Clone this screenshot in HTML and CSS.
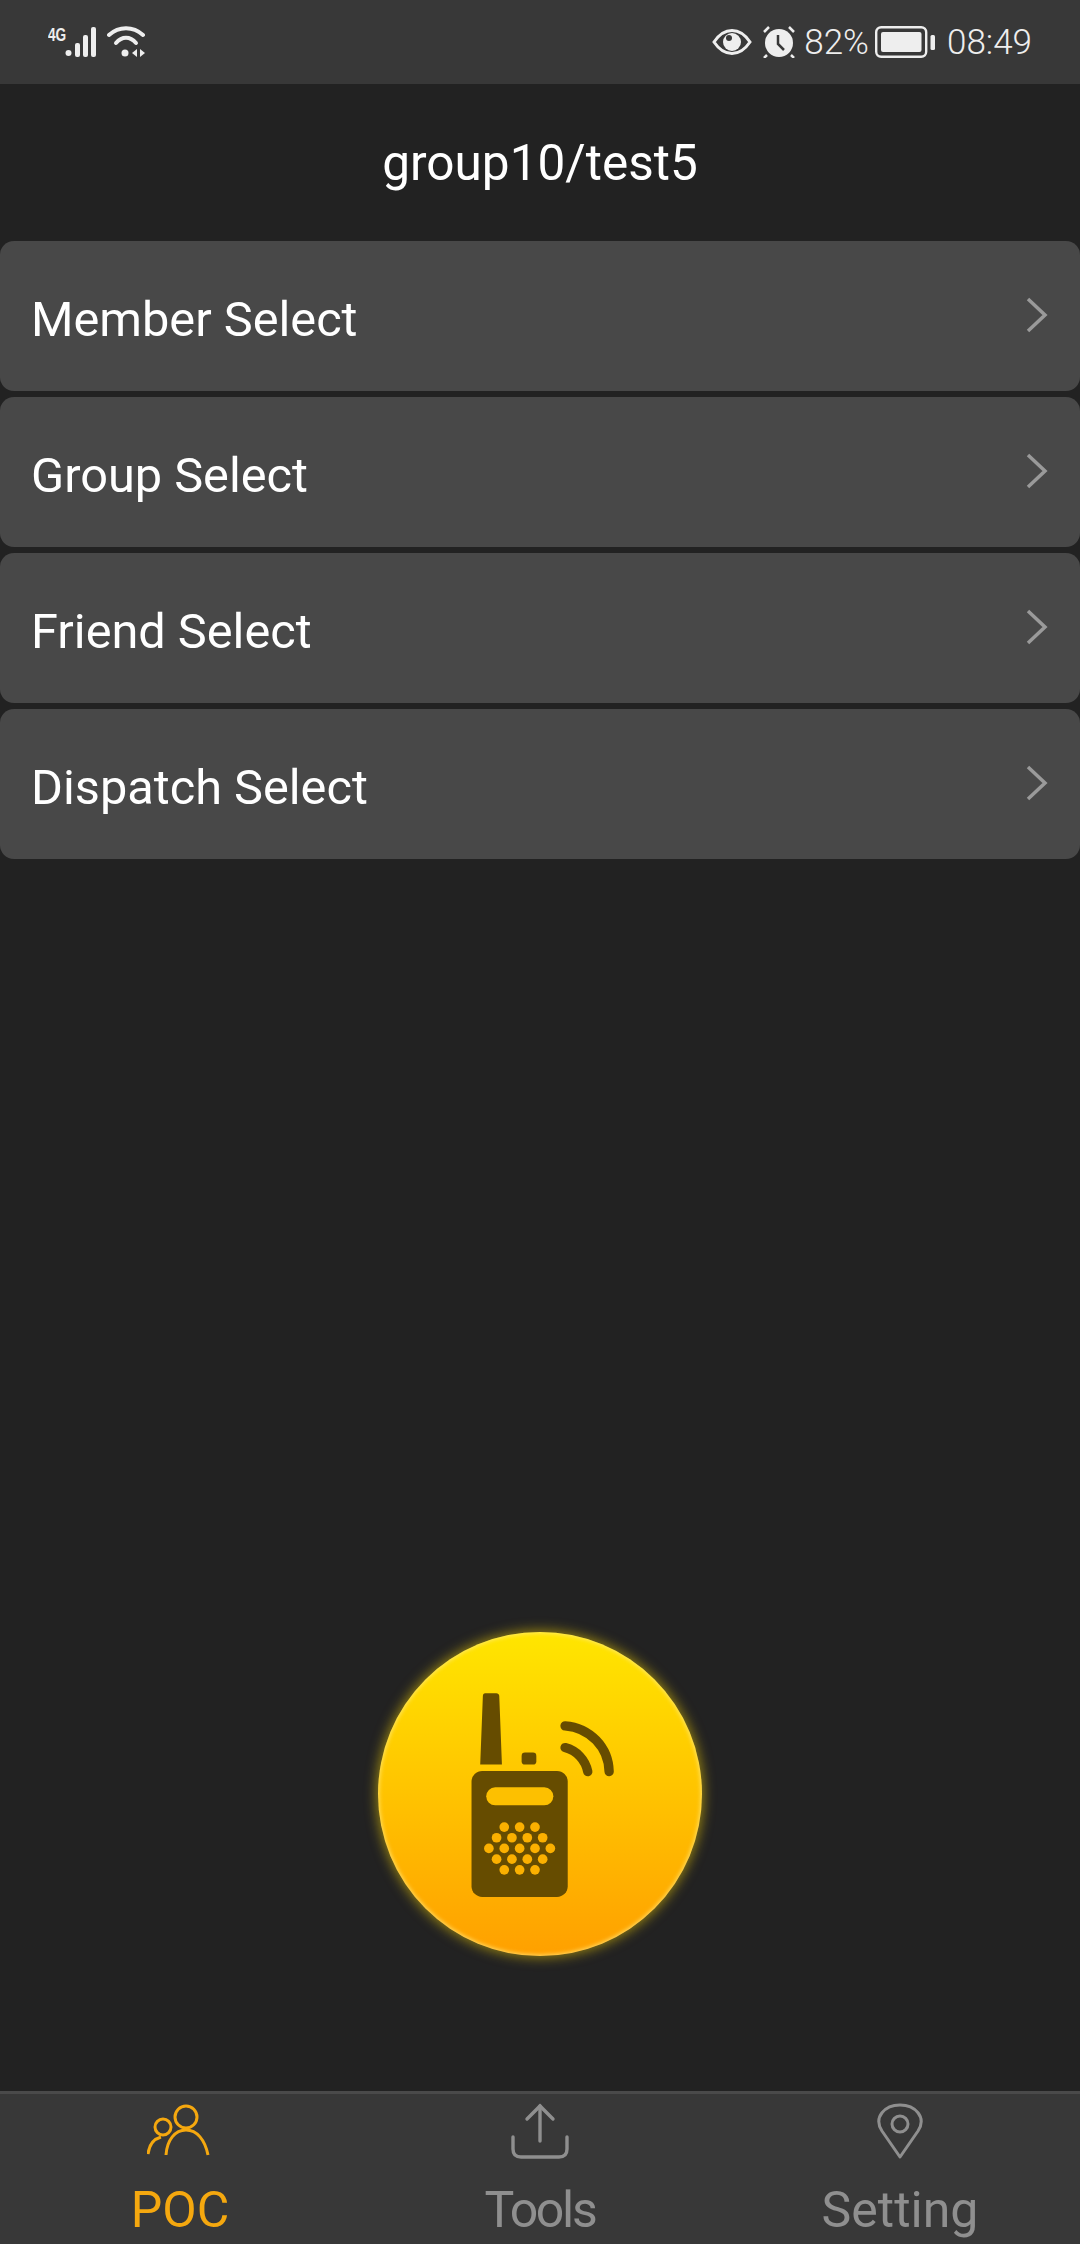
FILE: index.html
```html
<!DOCTYPE html>
<html lang="en">
<head>
<meta charset="utf-8">
<title>POC</title>
<link rel="stylesheet" href="styles.css">
</head>
<body>
<div class="app">
  <header class="status">
    <div class="status-left">
      <span class="net">4G</span>
      <svg class="signal" viewBox="0 0 34 32"><g fill="#eee"><circle cx="3.500" cy="27" r="3"/><rect x="10" y="17" width="5" height="14" rx="2"/><rect x="18" y="9" width="5" height="22" rx="2"/><rect x="26" y="1" width="5" height="30" rx="2"/></g></svg>
      <svg class="wifi" viewBox="0 0 40 32"><g fill="none" stroke="#eee" stroke-width="4" stroke-linecap="round"><path d="M2 9C12 0 26 0 36 9"/><path d="M9 17C15 10 23 10 29 17"/></g><circle cx="18" cy="27" r="3.500" fill="#eee"/><path d="M30 23v8l-5-4zM33 23v8l5-4z" fill="#eee"/></svg>
    </div>
    <div class="status-right">
      <svg class="eye" viewBox="0 0 40 26"><path d="M2 13C8 4 14 1.500 20 1.500S32 4 38 13C32 22 26 24.500 20 24.500S8 22 2 13Z" fill="none" stroke="#eee" stroke-width="3"/><circle cx="20" cy="13" r="9" fill="#eee"/><circle cx="17" cy="9" r="3" fill="#383838"/></svg>
      <svg class="alarm" viewBox="0 0 34 32"><circle cx="17" cy="17" r="14" fill="#eee"/><path d="M16 9v9l6 6" fill="none" stroke="#383838" stroke-width="2.500"/><path d="M2 6 7 1M32 6 27 1M5 29l-3 3M29 29l3 3" stroke="#eee" stroke-width="2.500" fill="none"/></svg>
      <span class="pct">82%</span>
      <svg class="battery" viewBox="0 0 60 32"><rect x="1.200" y="1.200" width="50" height="29.600" rx="5" fill="none" stroke="#eee" stroke-width="2.400"/><rect x="6" y="6" width="40.500" height="20" rx="2" fill="#eee"/><rect x="55.500" y="9" width="4.500" height="15" rx="1.500" fill="#eee"/></svg>
      <span class="time">08:49</span>
    </div>
  </header>

  <h1 class="title">group10/test5</h1>

  <nav class="list">
    <a class="row"><span>Member Select</span><svg class="chev" viewBox="0 0 22 36"><path d="M2 2 19 18 2 34" fill="none" stroke="#9a9a9a" stroke-width="3.500"/></svg></a>
    <a class="row"><span>Group Select</span><svg class="chev" viewBox="0 0 22 36"><path d="M2 2 19 18 2 34" fill="none" stroke="#9a9a9a" stroke-width="3.500"/></svg></a>
    <a class="row"><span>Friend Select</span><svg class="chev" viewBox="0 0 22 36"><path d="M2 2 19 18 2 34" fill="none" stroke="#9a9a9a" stroke-width="3.500"/></svg></a>
    <a class="row"><span>Dispatch Select</span><svg class="chev" viewBox="0 0 22 36"><path d="M2 2 19 18 2 34" fill="none" stroke="#9a9a9a" stroke-width="3.500"/></svg></a>
  </nav>

  <main class="stage">
    <button class="ptt" type="button" aria-label="Talk">
      <svg class="radio" viewBox="55 65 970 970">
        <g fill="#664c00">
          <path d="M375 248h34q8 0 9 8l8 206h-65l8-206q0-8 6-8Z"/>
          <rect x="485" y="426" width="44" height="36" rx="10"/>
          <rect x="335" y="481" width="288" height="377" rx="32"/>
        </g>
        <g fill="none" stroke="#664c00" stroke-width="28" stroke-linecap="round">
          <path d="M615 346C690 352 745 410 747 483"/>
          <path d="M615 411C650 420 676 448 683 483"/>
        </g>
        <rect x="379" y="530" width="201" height="54" rx="27" fill="#fdc000"/>
        <g fill="#fbb000">
          <circle cx="433" cy="649" r="14.500"/><circle cx="479" cy="649" r="14.500"/><circle cx="525" cy="649" r="14.500"/>
          <circle cx="410" cy="681" r="14.500"/><circle cx="456" cy="681" r="14.500"/><circle cx="502" cy="681" r="14.500"/><circle cx="548" cy="681" r="14.500"/>
          <circle cx="387" cy="713" r="14.500"/><circle cx="433" cy="713" r="14.500"/><circle cx="479" cy="713" r="14.500"/><circle cx="525" cy="713" r="14.500"/><circle cx="571" cy="713" r="14.500"/>
          <circle cx="410" cy="745" r="14.500"/><circle cx="456" cy="745" r="14.500"/><circle cx="502" cy="745" r="14.500"/><circle cx="548" cy="745" r="14.500"/>
          <circle cx="433" cy="777" r="14.500"/><circle cx="479" cy="777" r="14.500"/><circle cx="525" cy="777" r="14.500"/>
        </g>
      </svg>
    </button>
  </main>

  <footer class="tabs">
    <a class="tab active">
      <svg class="tab-icon" viewBox="0 0 66 56"><g fill="none" stroke="#f5a80f" stroke-width="3"><circle cx="39" cy="14" r="11"/><path d="M19 52C20 37 28 27 39 27S58 37 61 52"/><circle cx="16" cy="24" r="8"/><path d="M1 51C2 42 7 36 14 34"/></g></svg>
      <span>POC</span>
    </a>
    <a class="tab">
      <svg class="tab-icon" viewBox="0 0 66 56"><g fill="none" stroke="#8f8f8f" stroke-width="3.400" stroke-linecap="round"><path d="M33 3V38"/><path d="M20 16 33 3 46 16"/><path d="M6 34V46Q6 54 14 54H52Q60 54 60 46V34"/></g></svg>
      <span class="tight">Tools</span>
    </a>
    <a class="tab">
      <svg class="tab-icon" viewBox="0 0 66 56"><g fill="none" stroke="#8f8f8f" stroke-width="3"><path d="M33 54 15 28C6 14 18 2 33 2S60 14 51 28Z" stroke-linejoin="round"/><circle cx="33" cy="21" r="8"/></g></svg>
      <span>Setting</span>
    </a>
  </footer>
</div>
</body>
</html>
```
FILE: styles.css
```css
* { box-sizing: border-box; }
html, body { margin: 0; padding: 0; }
body { background: #222222; font-family: Roboto, "Noto Sans", sans-serif; }
.app { width: 1080px; height: 2244px; display: flex; flex-direction: column; background: #222222; overflow: hidden; }

.status { height: 84px; flex: none; background: #383838; display: flex; justify-content: space-between; align-items: center; padding: 0 48px; color: #eeeeee; }
.status-left, .status-right { display: flex; align-items: center; }
.status-left { gap: 2px; }
.net { font-family: "Liberation Sans", sans-serif; font-weight: 700; font-size: 19px; align-self: flex-start; margin-top: -2px; width: 15px; transform: scaleX(.72); transform-origin: left; }
.signal { width: 34px; height: 32px; }
.wifi { width: 40px; height: 32px; margin-left: 6px; }
.status-right { font-size: 35px; font-weight: 300; }
.eye { width: 40px; height: 26px; margin-right: 10px; }
.alarm { width: 34px; height: 32px; margin-right: 8px; }
.pct, .time { line-height: 1; }
.battery { width: 60px; height: 32px; margin: 0 12px 0 6px; }

.title { margin: 0; height: 157px; flex: none; font-size: 49.500px; font-weight: 400; color: #fff; display: flex; justify-content: center; align-items: center; padding-top: 1px; }

.list { display: flex; flex-direction: column; gap: 6px; flex: none; }
.row { height: 150px; display: flex; align-items: center; justify-content: space-between; padding: 0 32px 0 31px; background: #484848; border-radius: 14px; color: #fff; font-size: 48.700px; }
.row span { padding-top: 6px; }
.chev { width: 22px; height: 36px; margin-top: -2px; }

.stage { flex: 1; display: flex; justify-content: center; align-items: flex-end; padding-bottom: 135px; }
.ptt { width: 324px; height: 324px; padding: 0; border: 0; border-radius: 50%; background: linear-gradient(180deg, #ffe600 0%, #ffa000 100%); box-shadow: inset 0 0 4px 1px rgba(255, 235, 130, .8), 0 0 12px 2px rgba(255, 220, 0, .5); display: block; }
.radio { width: 100%; height: 100%; display: block; }

.tabs { height: 153px; flex: none; background: #383838; border-top: 3px solid #4a4a4a; display: grid; grid-template-columns: repeat(3, 1fr); }
.tab { display: flex; flex-direction: column; align-items: center; color: #8f8f8f; font-size: 50px; line-height: 60px; padding-top: 9px; }
.tab.active { color: #f5a80f; }
.tab-icon { width: 66px; height: 56px; margin-bottom: 21px; }
.tight { letter-spacing: -2.300px; }
```
